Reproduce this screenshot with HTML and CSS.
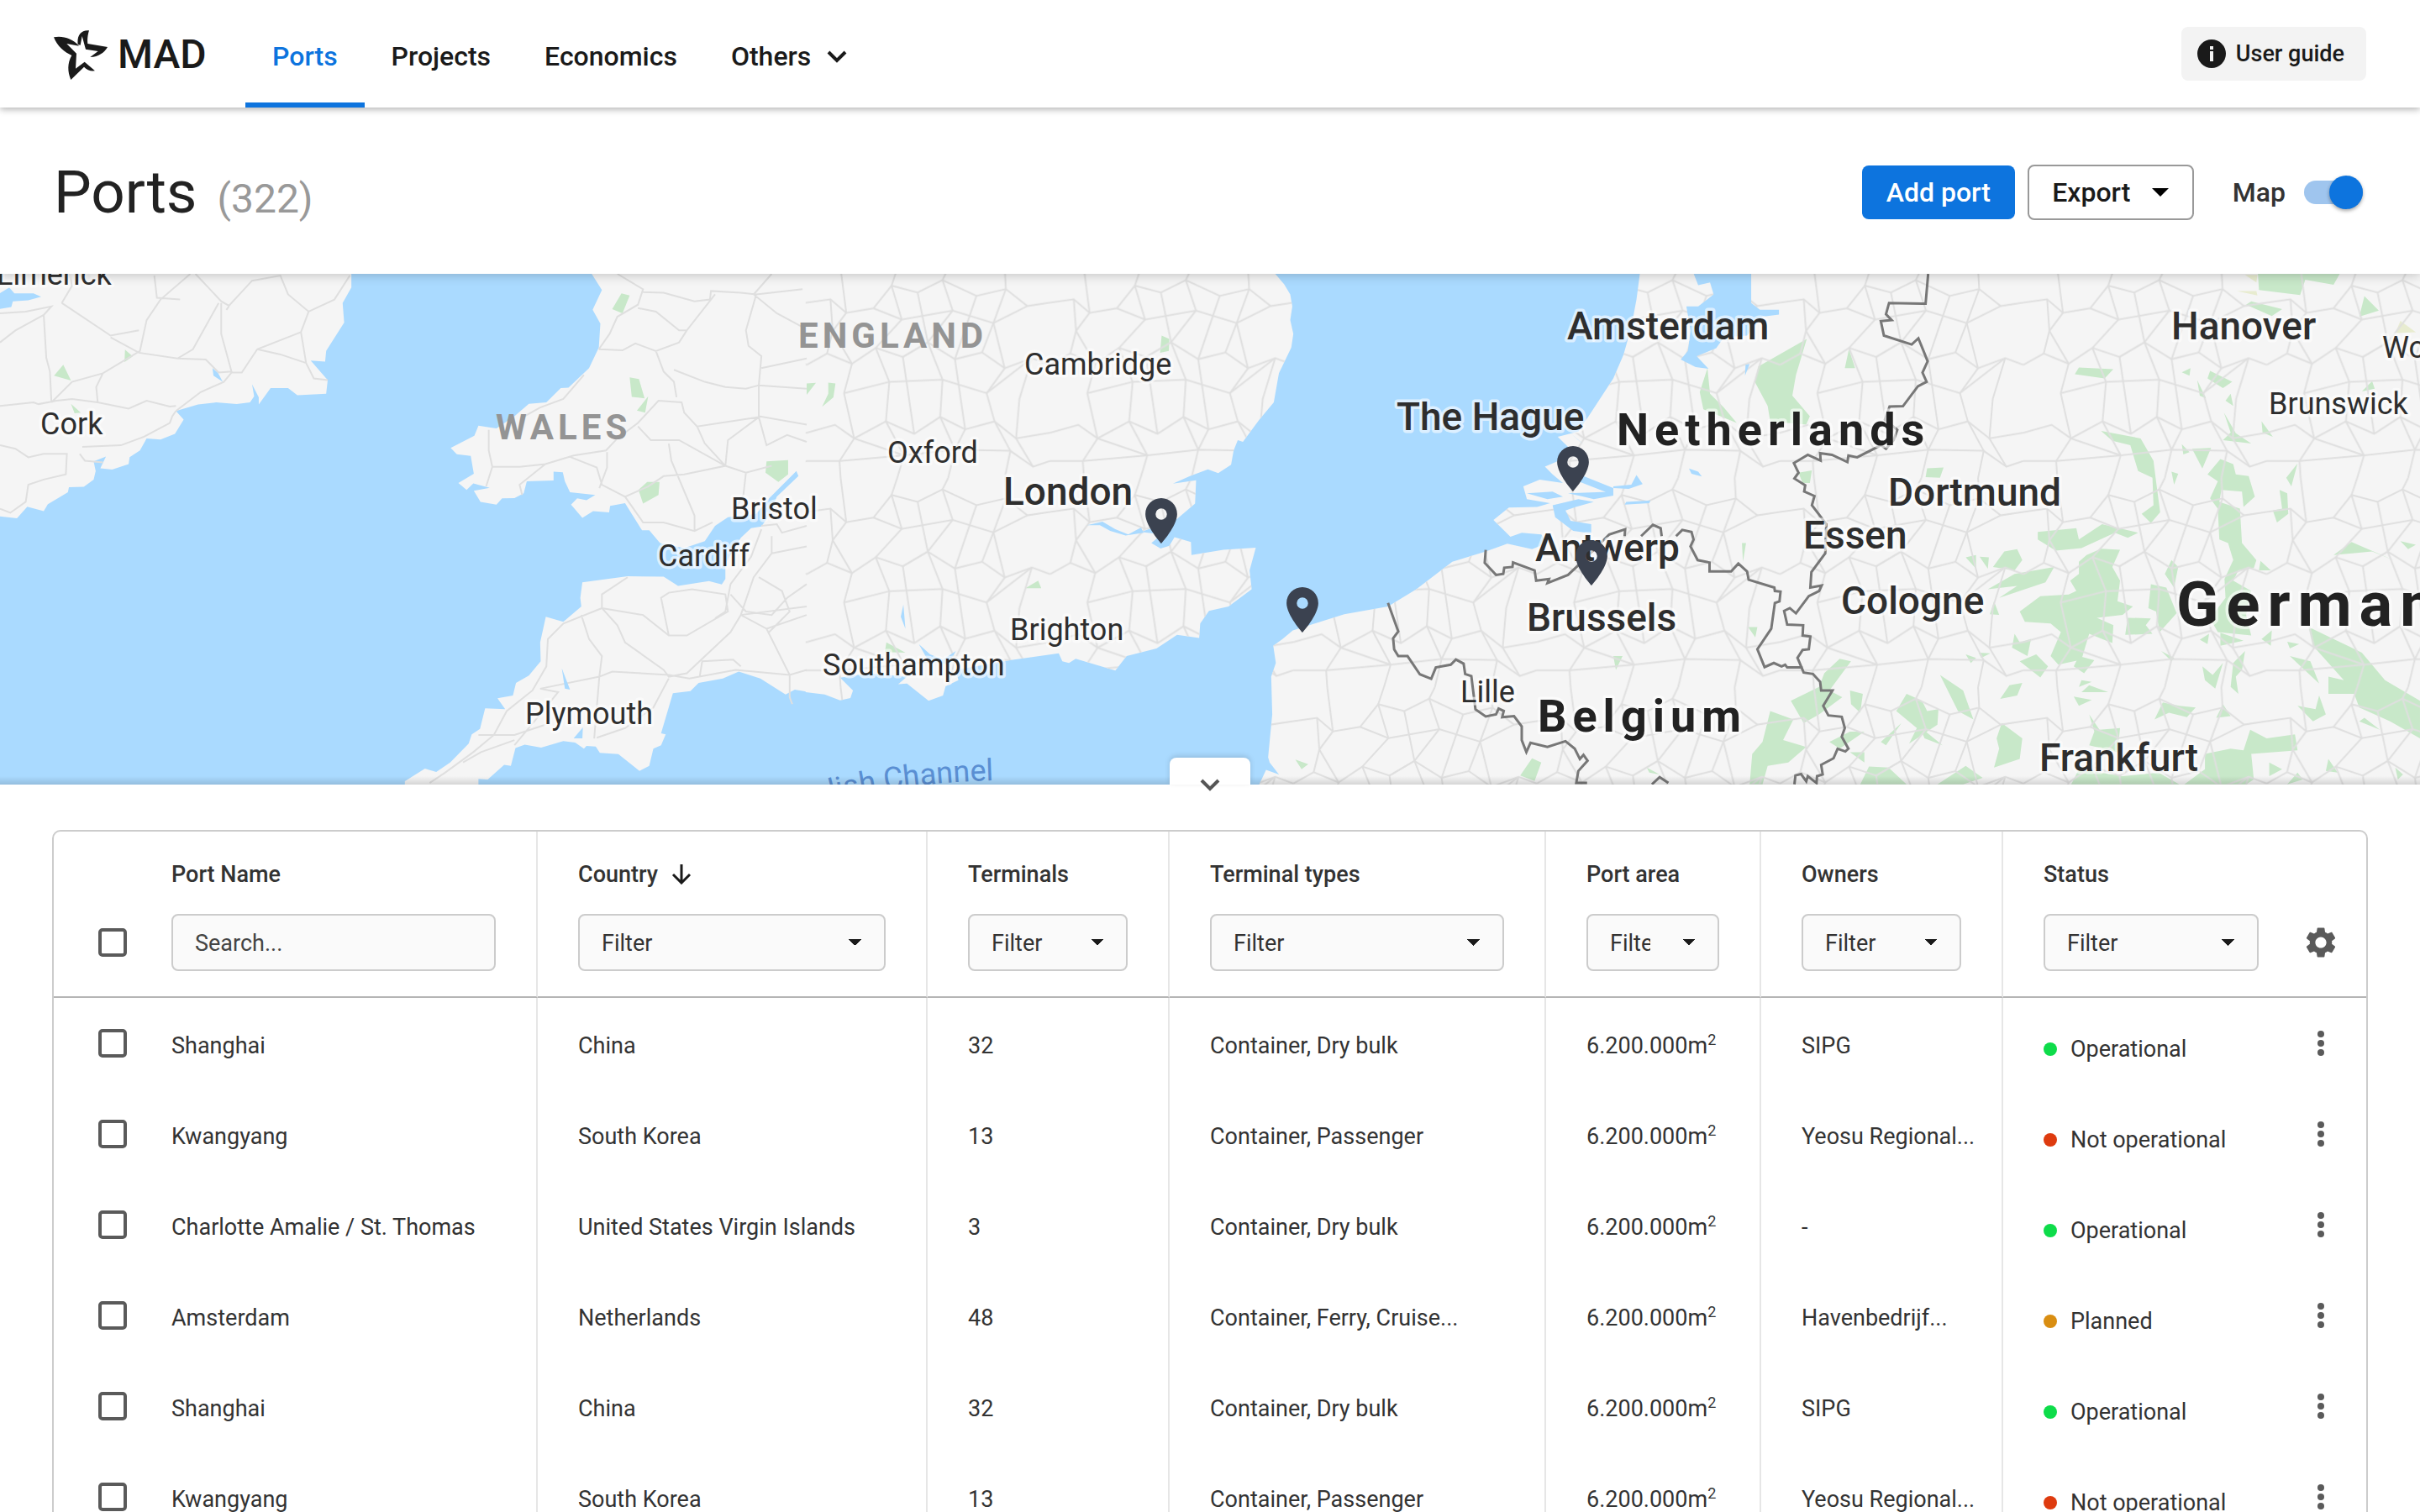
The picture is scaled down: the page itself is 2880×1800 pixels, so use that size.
FILE: index.html
```html
<!DOCTYPE html>
<html lang="en">
<head>
<meta charset="utf-8">
<title>MAD – Ports</title>
<link rel="stylesheet" href="styles.css">
</head>
<body>
<svg class="defs" width="0" height="0" aria-hidden="true">
  <symbol id="kebab" viewBox="0 0 8 30"><circle cx="4" cy="4" r="4"/><circle cx="4" cy="15" r="4"/><circle cx="4" cy="26" r="4"/></symbol>
  <symbol id="pin" viewBox="0 0 14 20"><path d="M7 0C3.13 0 0 3.13 0 7c0 5.25 7 13 7 13s7-7.750 7-13c0-3.870-3.130-7-7-7zm0 9.500a2.500 2.500 0 1 1 0-5 2.500 2.500 0 0 1 0 5z"/></symbol>
</svg>

<header class="topbar">
  <a class="brand" href="#">
    <svg class="brand-mark" viewBox="42 47 192 177" aria-hidden="true"><path d="M42 72C74 66 108 76 132 103L88 95L123 130L120 184L152 160L189 192C172 194 160 188 150 178L103 224C91 195 90 165 106 137C80 125 55 105 42 72Z"/><path d="M128 98C124 68 138 45 168 48C163 65 161 80 163 95L234 107C222 127 203 142 172 143L200 122L156 115L143 68L137 100Z"/></svg>
    <span>MAD</span>
  </a>
  <nav class="nav">
    <a class="nav-item is-active" href="#">Ports</a>
    <a class="nav-item" href="#">Projects</a>
    <a class="nav-item" href="#">Economics</a>
    <a class="nav-item" href="#">Others
      <svg width="26" height="16" viewBox="0 0 26 16" aria-hidden="true"><path d="M3 3l10 10L23 3" fill="none" stroke="currentColor" stroke-width="4"/></svg>
    </a>
  </nav>
  <button class="guide" type="button">
    <svg width="34" height="34" viewBox="0 0 34 34" aria-hidden="true"><circle cx="17" cy="17" r="17" fill="#1a1a1a"/><path d="M15 8h4v4h-4zM15 14h4v12h-4z" fill="#f3f3f3"/></svg>
    User guide
  </button>
</header>

<section class="toolbar">
  <h1 class="title">Ports <span class="count">(322)</span></h1>
  <div class="actions">
    <button class="btn btn-primary" type="button">Add port</button>
    <button class="btn btn-outline" type="button">Export
      <svg width="20" height="10" viewBox="0 0 20 10" aria-hidden="true"><path d="M0 0h20L10 10z"/></svg>
    </button>
    <label class="map-toggle">Map <input class="switch" type="checkbox" checked></label>
  </div>
</section>

<section class="map" aria-label="Map of ports">
  <svg class="map-canvas" viewBox="0 0 2880 608" preserveAspectRatio="xMidYMid slice">
    <defs>
      <pattern id="mesh" width="430" height="370" patternUnits="userSpaceOnUse" patternTransform="scale(1.100 1.650)">
        <g fill="none" stroke="#dfdfdf" stroke-width="3">
          <path d="M0 60L42 54L70 78L118 70L150 30L196 42L240 20L300 48L352 36L390 66L430 60"/>
          <path d="M0 170L36 150L80 168L122 140L170 156L214 130L262 160L310 148L350 176L398 158L430 170"/>
          <path d="M0 290L50 276L84 300L140 270L190 292L236 262L280 284L332 270L370 300L430 290"/>
          <path d="M60 0L70 78L46 110L80 168L66 220L84 300L58 340L60 370"/>
          <path d="M160 0L150 30L168 90L122 140L146 200L140 270L172 330L160 370"/>
          <path d="M250 0L240 20L258 74L214 130L240 196L236 262L262 320L250 370"/>
          <path d="M350 0L352 36L330 96L350 176L318 220L332 270L360 322L350 370"/>
          <path d="M118 70L168 90L258 74L330 96L390 66M66 220L146 200L240 196L318 220L398 158M58 340L172 330L262 320L360 322L400 350"/>
          <path d="M196 42L214 130L170 156L190 292M300 48L262 160L280 284L262 320M36 150L46 110L42 54M398 158L376 230L370 300L400 350L430 340M0 340L58 340M84 300L172 330M310 148L330 96"/>
        </g>
      </pattern>
      <path id="ireland" d="M-4 10L683 10L683 55L666 100L669 157L634 240L632 271L604 268L637 325L634 365L578 369L560 348L526 348L503 396L503 375L490 337L494 372L486 390L460 395L420 390L385 396L342 415L357 440L340 482L312 498L285 495L272 530L252 550L250 570L218 586L195 582L206 548L182 562L186 590L182 615L163 636L134 637L132 652L93 687L85 707L53 694L33 728L-4 722Z"/>
      <path id="west" d="M1148 10L1170 62L1152 120L1167 160L1164 230L1145 290L1105 347L1090 348L1062 390L1028 394L1000 430L965 466L930 458L922 487L876 523L888 541L915 546L921 598L891 625L907 645L920 626L952 639L921 648L934 680L965 688L976 670L1000 669L1018 655L1024 620L1076 618L1076 592L1094 594L1098 620L1108 652L1157 660L1140 675L1122 670L1110 688L1132 727L1153 707L1184 711L1186 692L1215 684L1248 763L1262 763L1283 800L1330 815L1370 795L1390 750L1415 725L1470 715L1495 670L1548 590L1552 605L1510 665L1495 720L1480 752L1460 757L1440 785L1410 860L1410 905L1403 921L1378 911L1318 925L1290 898L1220 897L1132 915L1128 960L1130 985L1095 1030L1061 1015L1050 1090L1051 1145L1028 1187L1003 1208L997 1245L967 1253L982 1285L943 1282L933 1342L917 1358L911 1385L875 1440L848 1468L826 1458L787 1495L787 1510L930 1510L930 1488L948 1490L980 1447L993 1450L1002 1398L1020 1388L1052 1397L1095 1378L1118 1382L1135 1400L1140 1392L1158 1394L1166 1412L1202 1416L1243 1465L1262 1450L1270 1400L1285 1390L1294 1358L1285 1355L1308 1238L1342 1232L1358 1208L1405 1195L1436 1175L1478 1195L1527 1242L1545 1228L1574 1235L1574 10Z"/>
      <path id="east" d="M-2 10L908 10L928 45L940 75L944 110L940 150L946 190L942 230L918 305L908 390L880 440L848 505L838 500L830 530L825 572L800 596L780 585L745 605L712 627L757 617L755 685L720 730L650 768L690 775L670 800L688 816L705 808L715 783L747 797L748 835L810 820L873 814L861 880L865 935L820 985L782 998L765 1035L763 1077L720 1068L680 1108L622 1130L600 1172L523 1138L510 1150L497 1145L490 1122L395 1142L290 1170L295 1200L270 1218L265 1245L237 1260L195 1210L178 1212L195 1190L120 1180L65 1193L90 1230L85 1252L65 1259L35 1242L-2 1235Z"/>
      <path id="continent" d="M878 1510L893 1462L918 1475L900 1440L897 1425L905 1300L903 1190L912 1150L907 1100L925 1080L945 1055L1045 1008L1130 985L1185 935L1255 855L1320 825L1362 802L1410 818L1440 800L1428 775L1390 770L1368 782L1335 733L1365 697L1420 695L1445 684L1400 672L1393 635L1425 615L1470 625L1450 600L1435 577L1462 560L1480 520L1460 490L1500 475L1520 430L1568 320L1588 250L1603 170L1613 90L1620 10L3150 10L3150 1510Z"/>
    </defs>
    <rect width="2880" height="608" fill="#aadaff"/>

    <g class="geo" transform="scale(.61224 .40816) translate(0 -15)">
      <use href="#ireland" fill="#f5f5f5"/>
      <use href="#west" fill="#f5f5f5"/>
      <g transform="translate(1568 0)">
        <use href="#east" fill="#f5f5f5"/>
        <use href="#continent" fill="#f5f5f5"/>
      </g>

      <!-- parks -->
      <g class="park">
        <path d="M123 280L138 326L105 312ZM243 236L258 256L242 272ZM138 394L157 420L145 422ZM1208 72L1224 78L1210 130L1190 118ZM1224 317L1242 322L1253 378L1228 374ZM1260 372L1254 420L1238 414ZM1258 622L1282 622L1280 660L1250 685L1241 645ZM1490 562L1532 558L1532 600L1513 622L1488 595Z"/>
        <g transform="translate(1568 0)"><path d="M0 335L18 333L0 368ZM42 332L56 335L52 375L30 403L42 365ZM690 195L705 205L704 240L687 245ZM450 910L456 932L425 932ZM155 1090L192 1120L152 1118ZM950 1432L975 1445L962 1460ZM1410 1428L1428 1440L1415 1494L1387 1478Z"/></g>
        <g transform="translate(3136 0)">
          <path d="M376 205L355 310L348 370L382 430L375 455L305 445L300 400L275 330L282 285ZM183 290L188 365L215 405L240 450L175 410L168 360ZM458 235L470 290L450 290ZM1253 15L1412 15L1400 47L1345 32L1335 77L1255 62ZM1460 80L1488 122L1450 140ZM1240 95L1300 118L1280 138L1230 105ZM905 288L972 293L955 320L897 308ZM1160 298L1203 330L1185 348L1155 320ZM1122 290L1120 312L1105 302ZM1475 328L1480 350L1455 358ZM1135 325L1152 378L1140 370ZM1200 365L1205 400L1190 385Z"/>
          <path d="M948 473L1025 495L1050 560L1055 620L1063 710L1045 742L1027 715L1050 690L1048 610L1020 590L1005 515L970 502ZM1187 420L1210 480L1240 510L1185 500L1200 478ZM1260 445L1282 490L1262 478ZM1105 512L1120 535L1108 542ZM1125 525L1162 523L1145 583ZM1180 555L1205 570L1210 600L1235 605L1247 665L1225 695L1222 650L1182 645L1178 680L1218 700L1222 800L1250 850L1245 873L1215 880L1205 910L1240 940L1230 1010L1240 1070L1175 1060L1160 1020L1190 960L1188 905L1205 850L1195 800L1178 790L1175 700L1160 670L1175 620L1155 600ZM1330 568L1318 635L1308 610ZM1085 592L1098 598L1090 630ZM1295 645L1310 655L1312 715L1290 740L1282 705L1300 700ZM610 582L642 580L635 610L607 608ZM360 595L386 588L382 625L368 625Z"/>
          <path d="M825 768L900 757L905 790L950 745L1020 770L1000 785L975 770L910 815L860 822L825 790ZM760 825L785 818L795 850L780 880L738 870ZM685 842L705 835L705 875ZM712 840L730 842L728 875ZM920 835L948 817L985 820L970 870L985 910L980 970L1010 985L990 1010L940 1018L972 1040L970 1092L925 1065L910 1140L865 1155L850 1130L870 1060L850 1035L800 1030L790 1000L830 955L885 950L900 940L888 910L905 890L905 855ZM780 890L857 870L840 915L750 960L785 925L728 935ZM740 970L750 1010L732 1008ZM1000 1018L1045 1020L1035 1040L1048 1065L995 1068ZM1045 920L1075 930L1095 1005L1062 1060L1055 1000L1040 990ZM1085 850L1098 870L1090 930L1072 890ZM1258 852L1278 880L1255 880ZM1435 797L1520 852L1475 825L1400 835ZM1530 795L1560 805L1545 818Z"/>
          <path d="M1352 1045L1400 1080L1455 1120L1500 1200L1568 1260L1568 1370L1510 1320L1450 1280L1440 1240L1390 1240L1390 1190L1420 1200L1360 1100ZM1315 1130L1355 1145L1372 1210L1340 1165ZM780 1065L790 1090L812 1080L805 1130L775 1105ZM790 1145L822 1125L845 1160L830 1192ZM905 1130L935 1142L915 1180L895 1160ZM685 1125L705 1135L695 1150ZM710 1120L733 1122L715 1135ZM1065 1115L1090 1135L1085 1145ZM1145 1160L1165 1185L1185 1150L1170 1225L1150 1200ZM1228 1115L1222 1170L1210 1190L1215 1240L1200 1220L1205 1150ZM1158 1065L1155 1095L1140 1082ZM1180 1062L1225 1085L1180 1100ZM1280 1055L1278 1100L1260 1080ZM1310 1088L1333 1095L1315 1108Z"/>
          <path d="M440 1138L462 1145L420 1230L445 1250L400 1300L370 1325L345 1260L400 1220L410 1180ZM305 1290L350 1315L330 1375L375 1395L340 1440L300 1450L290 1504L265 1504L270 1415L290 1380ZM635 1185L680 1230L700 1315L670 1290ZM570 1240L600 1260L610 1290L632 1285L630 1330L575 1385L590 1340L550 1290ZM770 1215L795 1208L785 1245L752 1255ZM595 1335L640 1390L605 1370ZM560 1325L530 1390L520 1380ZM755 1325L795 1370L790 1430L740 1455L750 1400L745 1370ZM460 1230L485 1240L480 1295L462 1270ZM910 1200L930 1205L905 1220ZM925 1215L962 1235L910 1235ZM895 1248L930 1258L905 1275ZM1068 1265L1100 1275L1132 1280L1115 1308L1080 1295L1052 1315ZM1185 1270L1200 1305L1172 1310ZM925 1300L945 1345L985 1340L980 1410L925 1390L935 1350ZM1330 1275L1365 1285L1372 1245L1385 1300L1360 1320ZM1460 1310L1490 1345L1450 1320Z"/>
          <path d="M1150 1415L1200 1400L1225 1405L1238 1345L1270 1370L1325 1358L1330 1405L1240 1415L1245 1490L1230 1504L1110 1504L1150 1460ZM497 1452L535 1455L570 1504L480 1504ZM685 1450L718 1485L680 1504L630 1504ZM905 1460L990 1480L1060 1470L1100 1504L890 1504ZM1390 1430L1408 1470L1385 1465ZM1275 1440L1300 1460L1275 1480ZM1330 1470L1340 1490L1310 1504ZM1520 1455L1535 1475L1525 1490ZM65 1455L90 1475L70 1470ZM0 1130L18 1130L5 1170ZM250 800L258 800L252 855ZM262 1045L280 1045L276 1075ZM420 1380L460 1350L488 1350L440 1400ZM460 1410L488 1410L488 1440Z"/>
        </g>
        <g fill="#e8ecd0" transform="translate(3136 0)"><path d="M1228 18L1252 18L1250 40ZM1212 65L1250 65L1252 78ZM1530 152L1560 185L1520 188Z"/></g>
      </g>

      <!-- roads -->
      <g transform="translate(1568 0)">
        <use href="#east" fill="url(#mesh)"/>
        <use href="#continent" fill="url(#mesh)"/>
      </g>
      <g class="road">
        <path d="M0 130L50 125L100 110L85 135L90 260L97 300L100 390M120 100L215 195L270 180M120 100L140 50L135 15M370 15L312 90L285 150L272 240L200 305L140 330L100 390M300 20L305 85L350 90M380 15L430 95L445 108L490 35L545 20L560 75L600 125L650 90L680 20M425 100L375 235L345 262L270 245L215 200M430 100L430 190L450 300L425 303L400 265L345 262M445 110L440 120M600 125L585 185L595 275L610 320L637 325M585 185L500 235L470 303L450 303M500 235L545 250L595 275M0 400L65 390L75 395L110 385L140 380L190 390L250 408L285 385L330 402L342 400M190 390L187 345L200 305M342 415L390 360L435 330L450 303M0 515L30 525L55 550L85 540L130 540L128 600L85 615L55 630L50 680L20 712L0 700M160 520L235 515L280 490L330 450L335 430L342 415M155 540L165 560L200 565M0 215L30 180L85 135"/>
        <path d="M1200 15L1250 60L1240 105L1200 140L1185 190L1164 235M1250 68L1290 70L1350 95L1380 90L1382 65L1440 70L1470 75L1560 60M1240 115L1275 125L1320 180L1335 180L1390 75M1164 235L1210 238L1235 218L1275 240L1320 215L1335 180M1275 240L1290 300L1310 330L1315 375M1310 295L1370 330L1410 345L1450 350L1475 340L1568 350M1470 75L1450 180L1455 225L1480 255L1475 340L1475 430L1568 455M1500 15L1465 75L1510 130L1560 170M1480 290L1568 262M1135 310L1095 380L1050 405L1020 430M950 470L950 530L957 578L1010 578L1060 570L1115 545L1178 530L1200 495L1240 450L1280 385L1325 390L1330 420L1355 460L1475 433M957 578L945 635M1060 570L1010 630L1015 660M1110 550L1160 580L1170 630L1215 665L1250 740L1290 740L1350 765L1385 740M1240 460L1265 500L1320 500L1410 575L1450 595L1500 575M1180 535L1180 580L1165 640M1300 510L1305 560L1350 720L1350 765M1215 665L1260 635L1290 605L1330 600L1410 575L1415 500L1475 433M1355 460L1370 510L1410 575M1475 433L1490 515L1530 485L1568 505M1450 595L1445 660L1430 700"/>
        <path d="M1480 750L1510 745L1520 770L1568 750M1480 760L1460 840L1420 920L1410 1000L1390 1020M1220 900L1170 950L1170 990L1200 1040L1215 1090L1290 1170L1300 1190L1335 1180L1420 1060L1440 1010L1568 985M1170 990L1095 1035L1065 1080L1062 1160L1035 1230L985 1290L960 1360L920 1410L865 1470L835 1500M1170 990L1250 1010L1300 1070L1335 1070L1415 1000L1410 950L1345 935L1300 945L1285 960L1300 1070M1130 1010L1145 1080L1170 1130L1165 1190L1155 1370M1165 1190L1050 1225L1085 1235L1050 1300L1000 1390M1165 1190L1190 1175L1300 1185L1340 1195L1430 1170L1535 1185L1568 1170M1300 1195L1270 1280L1215 1340L1160 1368M1500 780L1500 830L1465 900L1440 1010L1490 1050L1535 1185L1535 1250L1540 1270M1490 1050L1568 1010M1420 950L1450 1000L1500 1010L1530 960L1568 920M1360 1190L1365 1145L1425 1140L1440 1160M930 1360L1000 1360L1060 1330M900 1440L935 1410L1000 1375M1475 900L1520 940L1535 1000L1495 1060M1500 830L1568 810"/>
      </g>

      <!-- lakes and inlets -->
      <g fill="#aadaff">
        <path d="M-4 75L18 55L28 72L65 72L80 82L55 92L25 95L22 112L-4 118ZM413 290L424 305L433 330L415 312ZM1092 1165L1108 1228L1098 1225ZM1133 1338L1132 1370L1115 1370Z"/>
        <path transform="translate(1568 0)" d="M545 748L575 738L600 760L625 775L650 755L655 770L620 778L590 765L570 748ZM188 980L192 1050L183 1015ZM218 1095L240 1125L265 1140L290 1115L275 1155L235 1140ZM1490 590L1510 605L1568 640L1568 660L1500 620ZM1450 690L1500 672L1530 680L1495 695L1475 705L1485 735L1525 745L1525 772L1490 765L1455 725ZM1480 655L1568 650L1568 662L1530 672L1510 665ZM1485 480L1512 515L1500 500ZM1400 655L1450 650L1470 665L1440 672Z"/>
        <path transform="translate(3136 0)" d="M155 10L165 48L188 40L195 75L165 110L142 110L150 180L145 240L131 265L160 287L185 292L162 255L200 232L215 200L260 195L290 140L322 134L322 120L285 120L268 100L268 10ZM0 635L35 630L45 602L57 628L30 642L0 640ZM147 583L165 592L172 606L152 598ZM25 680L72 676L70 684L22 688ZM257 280L265 278L256 312Z"/>
      </g>

      <!-- borders -->
      <g class="border">
        <path transform="translate(1568 0)" d="M1130 975L1150 1058L1140 1078L1142 1110L1150 1130L1168 1130L1192 1183L1214 1196L1223 1163L1252 1155L1262 1140L1277 1152L1280 1182L1292 1188L1300 1285L1320 1306L1340 1300L1345 1283L1355 1290L1352 1308L1375 1305L1390 1335L1390 1375L1399 1410L1407 1383L1440 1395L1475 1378L1493 1400L1503 1430L1510 1418L1518 1435L1500 1465L1496 1500L1517 1500M1320 820L1318 858L1340 893L1354 890L1356 872L1372 870L1373 857L1415 880L1418 910L1443 905L1440 917L1480 893L1500 865L1560 775L1591 760L1590 780M1622 780L1645 747L1660 757L1662 780M1690 780L1702 762L1720 768L1724 790L1718 810L1732 850L1755 857L1755 883L1797 883L1811 860L1828 883L1831 907L1881 930L1882 940L1893 942L1891 970L1882 975L1875 1050L1848 1110L1862 1162L1880 1150L1895 1160L1902 1155L1906 1163L1936 1163"/>
        <path transform="translate(3136 0)" d="M612 15L607 102L536 100L530 133L541 150L520 153L526 195L580 221L593 203L611 270L601 303L609 330L592 343L563 401L537 402L528 440L552 470L545 500L530 525L520 515L474 550L457 545L455 564L425 543L402 538L403 560L378 543L351 567L360 595L352 612L373 632L371 650L391 663L386 690L414 745L412 830L385 885L383 930L405 924L400 940L380 955L355 1005L343 990L332 998L338 1038L369 1040L368 1070L383 1073L380 1110L368 1112L358 1135L370 1178L388 1182L402 1205L404 1230L426 1230L408 1275L418 1303L444 1307L450 1340L444 1365L457 1400L451 1408L436 1400L428 1428L404 1447L407 1475L396 1480L395 1500L378 1480L375 1495L365 1474L354 1478L352 1504M75 1504L90 1483L107 1500"/>
      </g>
    </g>

    <!-- place names -->
    <g class="place">
      <text x="-4" y="13">Limerick</text><text x="48" y="191">Cork</text>
      <text x="1219" y="120">Cambridge</text><text x="1056" y="225">Oxford</text>
      <text x="870" y="292">Bristol</text><text x="783" y="348">Cardiff</text>
      <text x="979" y="478">Southampton</text><text x="1202" y="436">Brighton</text>
      <text x="625" y="536">Plymouth</text><text x="1738" y="510">Lille</text>
      <text x="2700" y="167">Brunswick</text><text x="2835" y="100">Wolfsburg</text>
    </g>
    <g class="place city">
      <text x="1194" y="275">London</text><text x="1865" y="78">Amsterdam</text>
      <text x="1662" y="186">The Hague</text><text x="1827" y="342">Antwerp</text>
      <text x="1817" y="425">Brussels</text><text x="2247" y="276">Dortmund</text>
      <text x="2146" y="327">Essen</text><text x="2191" y="405">Cologne</text>
      <text x="2584" y="78">Hanover</text><text x="2427" y="592">Frankfurt</text>
    </g>
    <g class="region"><text x="950" y="88">ENGLAND</text><text x="590" y="197">WALES</text></g>
    <g class="place country"><text x="1924" y="204">Netherlands</text><text x="1830" y="545">Belgium</text></g>
    <text class="place country-large" x="2590" y="419">Germany</text>
    <path id="channel" d="M932 646Q1040 600 1260 602" fill="none"/>
    <text class="sea"><textPath href="#channel">English Channel</textPath></text>

    <g fill="#3b4250">
      <use href="#pin" x="1363" y="267" width="38" height="54"/>
      <use href="#pin" x="1531" y="373" width="38" height="54"/>
      <use href="#pin" x="1853" y="205" width="38" height="54"/>
      <use href="#pin" x="1875" y="317" width="38" height="54"/>
    </g>
  </svg>
  <button class="map-collapse" type="button" aria-label="Resize map">
    <svg width="26" height="16" viewBox="0 0 26 16" aria-hidden="true"><path d="M3 3l10 10L23 3" fill="none" stroke="#555" stroke-width="4"/></svg>
  </button>
</section>

<main class="content">
  <div class="grid">
    <table class="ports">
      <colgroup><col class="c-check"><col class="c-name"><col class="c-country"><col class="c-terminals"><col class="c-types"><col class="c-area"><col class="c-owners"><col class="c-status"><col class="c-menu"></colgroup>
      <thead>
        <tr>
          <th class="check"><span class="slot"><input class="tick" type="checkbox" aria-label="Select all ports"></span></th>
          <th class="name"><label class="heading" for="f-name">Port Name</label><input class="field" id="f-name" type="text" placeholder="Search..."></th>
          <th><label class="heading" for="f-country">Country <svg width="24" height="24" viewBox="0 0 24 24" aria-hidden="true"><path d="M12 0v22M2 12l10 10 10-10" fill="none" stroke="#1a1a1a" stroke-width="3"/></svg></label><select class="field" id="f-country"><option>Filter</option></select></th>
          <th><label class="heading" for="f-terminals">Terminals</label><select class="field" id="f-terminals"><option>Filter</option></select></th>
          <th><label class="heading" for="f-types">Terminal types</label><select class="field" id="f-types"><option>Filter</option></select></th>
          <th><label class="heading" for="f-area">Port area</label><select class="field" id="f-area"><option>Filter</option></select></th>
          <th><label class="heading" for="f-owners">Owners</label><select class="field" id="f-owners"><option>Filter</option></select></th>
          <th class="status-col"><label class="heading" for="f-status">Status</label><select class="field" id="f-status"><option>Filter</option></select></th>
          <th class="menu"><span class="slot"><button class="icon-btn" type="button" aria-label="Table settings"><svg width="44" height="44" viewBox="0 0 24 24" aria-hidden="true"><path d="M19.140 12.940c.04-.3.06-.61.06-.94 0-.32-.02-.64-.07-.94l2.030-1.580c.18-.14.23-.41.12-.61l-1.920-3.320c-.12-.22-.37-.29-.59-.22l-2.390.96c-.5-.38-1.030-.7-1.620-.94l-.36-2.540c-.04-.24-.24-.41-.48-.41h-3.840c-.24 0-.43.17-.47.41l-.36 2.540c-.59.24-1.130.57-1.620.94l-2.390-.96c-.22-.08-.47 0-.59.22L2.740 8.870c-.12.21-.08.47.12.61l2.030 1.580c-.05.3-.09.63-.09.94s.02.64.07.94l-2.030 1.580c-.18.14-.23.41-.12.61l1.920 3.320c.12.22.37.29.59.22l2.390-.96c.5.38 1.030.7 1.620.94l.36 2.540c.05.24.24.41.48.41h3.840c.24 0 .44-.17.47-.41l.36-2.540c.59-.24 1.130-.56 1.620-.94l2.390.96c.22.08.47 0 .59-.22l1.920-3.320c.12-.22.07-.47-.12-.61l-2.010-1.580zM12 15.600c-1.980 0-3.600-1.620-3.600-3.600s1.620-3.600 3.600-3.600 3.600 1.620 3.600 3.600-1.620 3.600-3.600 3.600z"/></svg></button></span></th>
        </tr>
      </thead>
      <tbody>
        <tr><td class="check"><input class="tick" type="checkbox" aria-label="Select Shanghai"></td><td class="name">Shanghai</td><td>China</td><td>32</td><td>Container, Dry bulk</td><td>6.200.000m<sup>2</sup></td><td>SIPG</td><td class="status-col"><span class="status operational">Operational</span></td><td class="menu"><button class="icon-btn" type="button" aria-label="Row menu"><svg width="8" height="30"><use href="#kebab"/></svg></button></td></tr>
        <tr><td class="check"><input class="tick" type="checkbox" aria-label="Select Kwangyang"></td><td class="name">Kwangyang</td><td>South Korea</td><td>13</td><td>Container, Passenger</td><td>6.200.000m<sup>2</sup></td><td>Yeosu Regional...</td><td class="status-col"><span class="status down">Not operational</span></td><td class="menu"><button class="icon-btn" type="button" aria-label="Row menu"><svg width="8" height="30"><use href="#kebab"/></svg></button></td></tr>
        <tr><td class="check"><input class="tick" type="checkbox" aria-label="Select Charlotte Amalie"></td><td class="name">Charlotte Amalie / St. Thomas</td><td>United States Virgin Islands</td><td>3</td><td>Container, Dry bulk</td><td>6.200.000m<sup>2</sup></td><td>-</td><td class="status-col"><span class="status operational">Operational</span></td><td class="menu"><button class="icon-btn" type="button" aria-label="Row menu"><svg width="8" height="30"><use href="#kebab"/></svg></button></td></tr>
        <tr><td class="check"><input class="tick" type="checkbox" aria-label="Select Amsterdam"></td><td class="name">Amsterdam</td><td>Netherlands</td><td>48</td><td>Container, Ferry, Cruise...</td><td>6.200.000m<sup>2</sup></td><td>Havenbedrijf...</td><td class="status-col"><span class="status planned">Planned</span></td><td class="menu"><button class="icon-btn" type="button" aria-label="Row menu"><svg width="8" height="30"><use href="#kebab"/></svg></button></td></tr>
        <tr><td class="check"><input class="tick" type="checkbox" aria-label="Select Shanghai"></td><td class="name">Shanghai</td><td>China</td><td>32</td><td>Container, Dry bulk</td><td>6.200.000m<sup>2</sup></td><td>SIPG</td><td class="status-col"><span class="status operational">Operational</span></td><td class="menu"><button class="icon-btn" type="button" aria-label="Row menu"><svg width="8" height="30"><use href="#kebab"/></svg></button></td></tr>
        <tr><td class="check"><input class="tick" type="checkbox" aria-label="Select Kwangyang"></td><td class="name">Kwangyang</td><td>South Korea</td><td>13</td><td>Container, Passenger</td><td>6.200.000m<sup>2</sup></td><td>Yeosu Regional...</td><td class="status-col"><span class="status down">Not operational</span></td><td class="menu"><button class="icon-btn" type="button" aria-label="Row menu"><svg width="8" height="30"><use href="#kebab"/></svg></button></td></tr>
      </tbody>
    </table>
  </div>
</main>
</body>
</html>
```

FILE: styles.css
```css
* { box-sizing: border-box; }
body {
  margin: 0;
  height: 100vh;
  display: flex;
  flex-direction: column;
  overflow: hidden;
  background: #fff;
  color: #333;
  font-family: Roboto, "Liberation Sans", sans-serif;
  font-size: 27px;
  line-height: 32px;
}
a { color: inherit; text-decoration: none; }
button, input, select { font: inherit; color: inherit; margin: 0; }
button { border: 0; padding: 0; background: none; cursor: pointer; }
svg { display: block; flex: none; }
.defs { position: absolute; }

/* top bar */
.topbar {
  position: relative;
  z-index: 3;
  flex: none;
  display: flex;
  align-items: center;
  height: 128px;
  padding: 0 64px;
  background: #fff;
  color: #1a1a1a;
  box-shadow: 0 2px 8px rgba(0, 0, 0, .32);
}
.brand { display: flex; align-items: center; gap: 12px; width: 228px; padding-top: 2px; font-size: 48px; font-weight: 500; line-height: 56px; }
.brand-mark { width: 64px; height: 59px; fill: #1a1a1a; }
.nav { display: flex; align-self: stretch; font-size: 32px; font-weight: 500; }
.nav-item { display: flex; align-items: center; gap: 18px; padding: 12px 32px 0; border-bottom: 6px solid transparent; }
.nav-item.is-active { color: #0d74de; border-color: #0d74de; }
.guide {
  display: flex;
  align-items: center;
  gap: 12px;
  height: 64px;
  margin-left: auto;
  padding: 0 26px 0 19px;
  border-radius: 8px;
  background: #f3f3f3;
  font-size: 27px;
  font-weight: 500;
}

/* page heading */
.toolbar {
  position: relative;
  z-index: 2;
  flex: none;
  display: flex;
  align-items: center;
  justify-content: space-between;
  height: 198px;
  padding: 0 68px 0 64px;
  background: #fff;
  box-shadow: 0 2px 12px rgba(0, 0, 0, .2);
}
.title { display: flex; align-items: baseline; gap: 24px; margin: 0; padding-top: 12px; color: #222; font-size: 71px; font-weight: 400; line-height: 80px; }
.count { color: #999; font-size: 48px; }
.actions { display: flex; align-items: center; padding-top: 4px; font-size: 32px; font-weight: 500; }
.btn { display: flex; align-items: center; justify-content: center; height: 64px; border-radius: 8px; font-weight: 500; }
.btn-primary { width: 182px; background: #0d74de; color: #fff; }
.btn-outline { width: 198px; height: 66px; gap: 26px; margin-left: 15px; border: 2px solid #999; color: #1a1a1a; }
.map-toggle { display: flex; align-items: center; gap: 22px; margin-left: 46px; }
.switch {
  appearance: none;
  position: relative;
  width: 70px;
  height: 28px;
  border-radius: 14px;
  background: #9fc5ee;
}
.switch::after {
  content: "";
  position: absolute;
  top: -6px;
  right: 0;
  width: 40px;
  height: 40px;
  border-radius: 50%;
  background: #0d74de;
  box-shadow: 0 2px 4px rgba(0, 0, 0, .35);
}

/* map */
.map { position: relative; flex: none; height: 608px; }
.map-canvas { width: 100%; height: 100%; font-family: Roboto, sans-serif; }
.map::after { content: ""; position: absolute; left: 0; right: 0; bottom: 0; height: 10px; background: linear-gradient(to top, rgba(0, 0, 0, .13), transparent); pointer-events: none; }
.geo path { vector-effect: non-scaling-stroke; }
.park { fill: #c8e8c9; }
.road { fill: none; stroke: #dfdfdf; stroke-width: 2; }
.border { fill: none; stroke: #777; stroke-width: 3; }
.place { fill: #2e2e2e; stroke: #fff; stroke-opacity: .6; stroke-width: 7; stroke-linejoin: round; paint-order: stroke; font-size: 36px; }
.city { font-size: 46px; font-weight: 500; }
.region { fill: #949494; font-size: 42px; font-weight: 700; letter-spacing: 5px; }
.country { fill: #222; font-size: 54px; font-weight: 700; letter-spacing: 7px; }
.country-large { fill: #222; font-size: 74px; font-weight: 700; letter-spacing: 9px; }
.sea { fill: #5a8fd3; font-size: 36px; }
.map-collapse {
  position: absolute;
  z-index: 1;
  left: calc(50% - 48px);
  bottom: 0;
  width: 96px;
  height: 32px;
  display: flex;
  justify-content: center;
  padding-top: 24px;
  border-radius: 8px 8px 0 0;
  background: #fff;
  box-shadow: 0 -2px 6px rgba(0, 0, 0, .14);
}

/* table */
.content { flex: 1; min-height: 0; overflow: hidden; padding: 54px 62px 0; }
.grid { border: 2px solid #ccc; border-radius: 10px; }
.ports { width: 100%; table-layout: fixed; border-collapse: separate; border-spacing: 0; }
.c-check { width: 140px; }
.c-name { width: 436px; }
.c-country { width: 464px; }
.c-terminals { width: 288px; }
.c-types { width: 448px; }
.c-area { width: 256px; }
.c-owners { width: 288px; }
.c-status { width: 324px; }
.c-menu { width: 108px; }
th, td { border-right: 2px solid #e6e6e6; text-align: left; white-space: nowrap; }
th { padding: 34px 48px 30px; border-bottom: 2px solid #b5b5b5; font-weight: 400; vertical-align: bottom; }
td { height: 108px; padding: 6px 0 0 48px; }
th.check, td.check { padding-left: 53px; padding-right: 0; border-right: 0; }
td.check, td.menu { padding-top: 0; }
th.name, td.name { padding-left: 0; }
th.status-col { padding-right: 20px; border-right: 0; }
td.status-col { padding-top: 14px; border-right: 0; }
th.menu, td.menu { padding-left: 0; padding-right: 0; border-right: 0; }
.slot { display: flex; align-items: center; height: 68px; }
.heading { display: flex; align-items: center; gap: 16px; height: 32px; padding-top: 2px; margin-bottom: 32px; font-weight: 500; }
.field {
  appearance: none;
  display: block;
  width: 100%;
  height: 68px;
  padding: 2px 26px 0;
  border: 2px solid #ccc;
  border-radius: 8px;
  background: #fafafa;
  outline: 0;
}
.field::placeholder { color: #444; opacity: 1; }
select.field {
  padding-right: 80px;
  background-image: linear-gradient(to bottom left, #1a1a1a 50%, transparent 50%), linear-gradient(to bottom right, #1a1a1a 50%, transparent 50%);
  background-repeat: no-repeat;
  background-position: right 34px center, right 26px center;
  background-size: 8px 8px;
}
#f-terminals, #f-owners { padding-right: 60px; }
.tick { appearance: none; display: block; width: 34px; height: 34px; border: 4px solid #5a5a5a; border-radius: 5px; background: #fff; }
.status { display: flex; align-items: center; gap: 16px; }
.status::before { content: ""; width: 16px; height: 16px; border-radius: 50%; background: var(--dot); }
.operational { --dot: #0edc4a; }
.down { --dot: #de3b0f; }
.planned { --dot: #d98e12; }
.icon-btn { display: flex; align-items: center; justify-content: center; width: 100%; fill: #5a5a5a; }
sup { font-size: 18px; line-height: 0; vertical-align: 10px; }
```
